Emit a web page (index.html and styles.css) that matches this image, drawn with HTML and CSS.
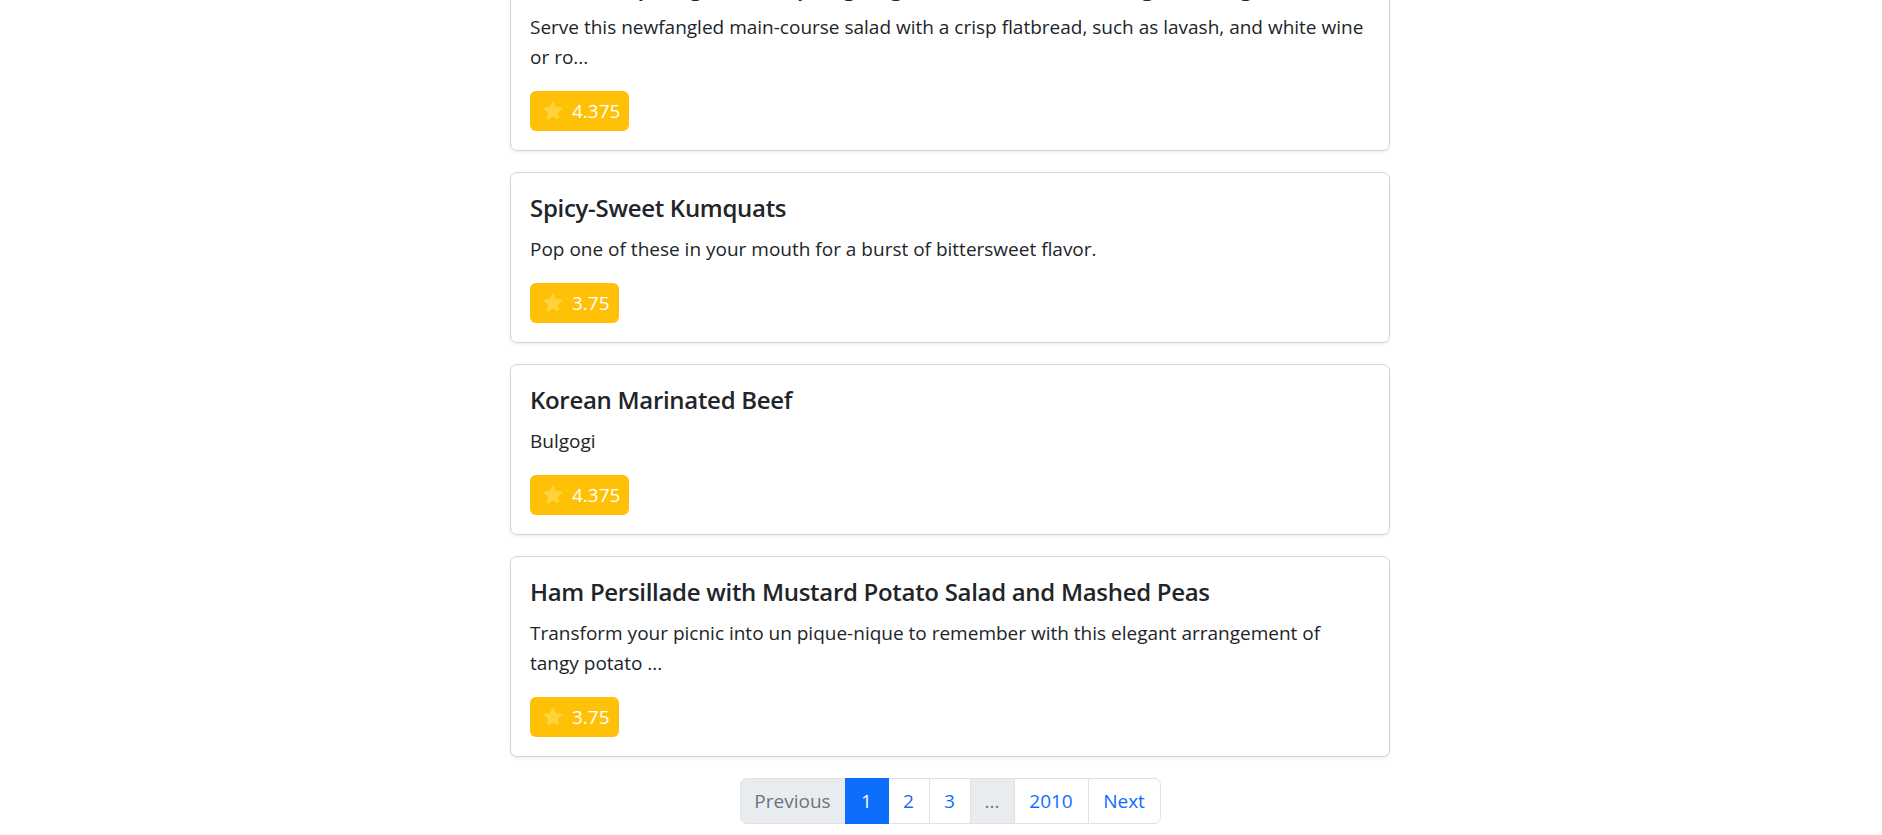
FILE: index.html
```html
<!DOCTYPE html>
<html lang="en">
<head>
<meta charset="utf-8">
<title>Recipes</title>
<link rel="stylesheet" href="styles.css">
</head>
<body>
<main class="container">
  <div class="recipe-list">
    <article class="card">
      <h5 class="card-title">Grilled Asparagus and Spring Vegetable Salad with Ginger Vinaigrette</h5>
      <p class="card-text">Serve this newfangled main-course salad with a crisp flatbread, such as lavash, and white wine or ro...</p>
      <span class="rating"><svg class="star" viewBox="0 0 24 24"><path d="M12 3.2l2.6 5.6 6 .7-4.5 4.1 1.2 6-5.3-3-5.3 3 1.2-6-4.5-4.1 6-.7z"/></svg>4.375</span>
    </article>
    <article class="card">
      <h5 class="card-title">Spicy-Sweet Kumquats</h5>
      <p class="card-text">Pop one of these in your mouth for a burst of bittersweet flavor.</p>
      <span class="rating"><svg class="star" viewBox="0 0 24 24"><path d="M12 3.2l2.6 5.6 6 .7-4.5 4.1 1.2 6-5.3-3-5.3 3 1.2-6-4.5-4.1 6-.7z"/></svg>3.75</span>
    </article>
    <article class="card">
      <h5 class="card-title">Korean Marinated Beef</h5>
      <p class="card-text">Bulgogi</p>
      <span class="rating"><svg class="star" viewBox="0 0 24 24"><path d="M12 3.2l2.6 5.6 6 .7-4.5 4.1 1.2 6-5.3-3-5.3 3 1.2-6-4.5-4.1 6-.7z"/></svg>4.375</span>
    </article>
    <article class="card">
      <h5 class="card-title">Ham Persillade with Mustard Potato Salad and Mashed Peas</h5>
      <p class="card-text">Transform your picnic into un pique-nique to remember with this elegant arrangement of tangy potato ...</p>
      <span class="rating"><svg class="star" viewBox="0 0 24 24"><path d="M12 3.2l2.6 5.6 6 .7-4.5 4.1 1.2 6-5.3-3-5.3 3 1.2-6-4.5-4.1 6-.7z"/></svg>3.75</span>
    </article>
  </div>
  <nav class="pager">
    <ul class="pagination">
      <li class="page-item disabled w-prev"><span>Previous</span></li>
      <li class="page-item active w-1"><span>1</span></li>
      <li class="page-item w-2"><a href="#">2</a></li>
      <li class="page-item w-3"><a href="#">3</a></li>
      <li class="page-item disabled w-dots"><span>...</span></li>
      <li class="page-item w-last"><a href="#">2010</a></li>
      <li class="page-item w-next"><a href="#">Next</a></li>
    </ul>
  </nav>
</main>
</body>
</html>
```

FILE: styles.css
```css
* { box-sizing: border-box; }

html, body {
  margin: 0;
  padding: 0;
  background: #fff;
}

body {
  font-family: "Open Sans", "Noto Sans", sans-serif;
  font-size: 20px;
  line-height: 30px;
  color: #212529;
  overflow: hidden;
}

.container {
  width: 898px;
  margin: 0 auto;
  padding-left: 18px;
}

.recipe-list {
  margin-top: -50px;
  display: flex;
  flex-direction: column;
  gap: 21px;
}

.card {
  border: 1px solid #d4d4d4;
  border-radius: 7px;
  padding: 20px 19px 19px 19px;
  background: #fff;
  box-shadow: 0 2px 3px rgba(0, 0, 0, 0.06);
}

.card-title {
  margin: 0 0 11px;
  font-size: 24px;
  line-height: 30px;
  font-weight: 600;
  letter-spacing: -0.3px;
  white-space: nowrap;
}

.card-text {
  margin: 0 0 19px;
  font-size: 19px;
}

.rating {
  display: inline-flex;
  align-items: center;
  gap: 8px;
  height: 40px;
  padding: 0 9px 0 12px;
  background: #ffc107;
  color: #fff;
  border-radius: 6px;
  font-size: 19px;
}

.star {
  width: 22px;
  height: 22px;
  fill: #ffd43b;
  stroke: #ffd43b;
  stroke-width: 2.4;
  stroke-linejoin: round;
}

.pager {
  display: flex;
  justify-content: center;
  margin-top: 21px;
}

.pagination {
  display: flex;
  list-style: none;
  margin: 0;
  padding: 0;
}

.page-item > a,
.page-item > span {
  display: flex;
  align-items: center;
  justify-content: center;
  height: 46px;
  padding: 0 15px;
  border: 1px solid #dee2e6;
  margin-left: -1px;
  background: #fff;
  color: #0d6efd;
  text-decoration: none;
  font-size: 19px;
}

.page-item:first-child > span {
  margin-left: 0;
  border-radius: 7px 0 0 7px;
}

.page-item:last-child > a {
  border-radius: 0 7px 7px 0;
}

.page-item.disabled > span {
  background: #e9ecef;
  color: #6c757d;
}

.page-item.active > span {
  background: #0d6efd;
  border-color: #0d6efd;
  color: #fff;
  position: relative;
  z-index: 1;
}

.w-prev > span { width: 106px; }
.w-1 > span { width: 44px; }
.w-2 > a { width: 42px; }
.w-3 > a { width: 42px; }
.w-dots > span { width: 45px; }
.w-last > a { width: 75px; }
.w-next > a { width: 73px; }
```
